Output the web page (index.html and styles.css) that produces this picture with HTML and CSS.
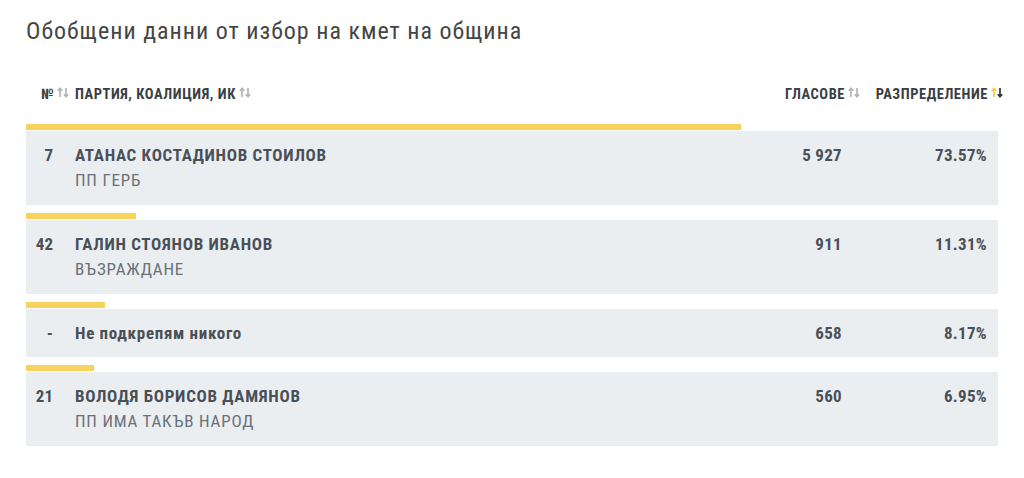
FILE: index.html
```html
<!DOCTYPE html>
<html lang="bg">
<head>
<meta charset="utf-8">
<link rel="stylesheet" href="styles.css">
</head>
<body>
<div class="page">
  <h1 class="title">Обобщени данни от избор на кмет на община</h1>
  <div class="thead">
    <div class="th th-num">№<svg class="sort" viewBox="0 0 12 11"><path d="M3 10V1.5M0.8 3.8L3 1.3L5.2 3.8" class="a-up"/><path d="M9 1v8.5M6.8 7.2L9 9.7L11.2 7.2" class="a-down"/></svg></div>
    <div class="th th-name">ПАРТИЯ, КОАЛИЦИЯ, ИК<svg class="sort" viewBox="0 0 12 11"><path d="M3 10V1.5M0.8 3.8L3 1.3L5.2 3.8" class="a-up"/><path d="M9 1v8.5M6.8 7.2L9 9.7L11.2 7.2" class="a-down"/></svg></div>
    <div class="th th-votes">ГЛАСОВЕ<svg class="sort" viewBox="0 0 12 11"><path d="M3 10V1.5M0.8 3.8L3 1.3L5.2 3.8" class="a-up"/><path d="M9 1v8.5M6.8 7.2L9 9.7L11.2 7.2" class="a-down"/></svg></div>
    <div class="th th-pct">РАЗПРЕДЕЛЕНИЕ<svg class="sort active" viewBox="0 0 12 11"><path d="M3 10V1.5M0.8 3.8L3 1.3L5.2 3.8" class="a-up"/><path d="M9 1v8.5M6.8 7.2L9 9.7L11.2 7.2" class="a-down"/></svg></div>
  </div>

  <div class="group">
    <div class="bar" style="width:73.57%"></div>
    <div class="row">
      <div class="num">7</div>
      <div class="name"><div class="cand">АТАНАС КОСТАДИНОВ СТОИЛОВ</div><div class="party">ПП ГЕРБ</div></div>
      <div class="votes">5 927</div>
      <div class="pct">73.57%</div>
    </div>
  </div>

  <div class="group">
    <div class="bar" style="width:11.31%"></div>
    <div class="row">
      <div class="num">42</div>
      <div class="name"><div class="cand">ГАЛИН СТОЯНОВ ИВАНОВ</div><div class="party">ВЪЗРАЖДАНЕ</div></div>
      <div class="votes">911</div>
      <div class="pct">11.31%</div>
    </div>
  </div>

  <div class="group">
    <div class="bar" style="width:8.17%"></div>
    <div class="row single">
      <div class="num">-</div>
      <div class="name"><div class="cand">Не подкрепям никого</div></div>
      <div class="votes">658</div>
      <div class="pct">8.17%</div>
    </div>
  </div>

  <div class="group">
    <div class="bar" style="width:6.95%"></div>
    <div class="row">
      <div class="num">21</div>
      <div class="name"><div class="cand">ВОЛОДЯ БОРИСОВ ДАМЯНОВ</div><div class="party">ПП ИМА ТАКЪВ НАРОД</div></div>
      <div class="votes">560</div>
      <div class="pct">6.95%</div>
    </div>
  </div>
</div>
</body>
</html>
```

FILE: styles.css
```css
* { box-sizing: border-box; }
html, body { margin: 0; padding: 0; background: #fff; }
body {
  font-family: "Roboto Condensed", Roboto, "Liberation Sans", sans-serif;
  font-stretch: condensed;
  color: #495057;
}
.page {
  width: 998px;
  padding: 16px 0 0 26px;
}
.title {
  margin: 0;
  font-size: 24px;
  line-height: 30px;
  font-weight: 400;
  letter-spacing: 1px;
  color: #454545;
}
.thead {
  display: flex;
  align-items: center;
  height: 30px;
  margin-top: 33px;
  margin-right: -5px;
  padding-left: 15px;
  font-size: 14.5px;
  font-weight: 700;
  letter-spacing: 0.55px;
  color: #3a3f44;
}
.th { display: flex; align-items: center; white-space: nowrap; }
.th-num { width: 34px; }
.th-name { flex: 1; }
.th-votes { width: 120px; justify-content: flex-end; }
.th-pct { width: 143px; justify-content: flex-end; }
.sort {
  width: 12px;
  height: 11px;
  margin-left: 3px;
  margin-top: -3px;
  fill: none;
  stroke-width: 1.7;
}
.sort .a-up, .sort .a-down { stroke: #b5b5b5; }
.sort.active .a-up { stroke: #f2cd4f; }
.sort.active .a-down { stroke: #2e3338; }

.group { margin-top: 8px; }
.thead + .group { margin-top: 15px; }
.bar {
  height: 6px;
  margin-bottom: 1px;
  background: #f7d35e;
}
.row {
  display: flex;
  align-items: flex-start;
  background: #ebeef1;
  padding: 13px 11px 13px 0;
  min-height: 74px;
}
.row.single { min-height: 48px; padding-bottom: 12px; }
.num {
  width: 27px;
  text-align: right;
  font-size: 17px;
  line-height: 22px;
  font-weight: 700;
}
.name { flex: 1; margin-left: 22px; }
.cand {
  font-size: 17px;
  line-height: 22px;
  font-weight: 700;
  letter-spacing: 0.7px;
}
.party {
  margin-top: 3px;
  font-size: 17px;
  line-height: 22px;
  font-weight: 400;
  letter-spacing: 0.8px;
  color: #6a7177;
}
.votes, .pct {
  font-size: 17px;
  line-height: 22px;
  font-weight: 700;
  letter-spacing: 0.3px;
  text-align: right;
}
.votes { width: 100px; }
.pct { width: 145px; }
```
